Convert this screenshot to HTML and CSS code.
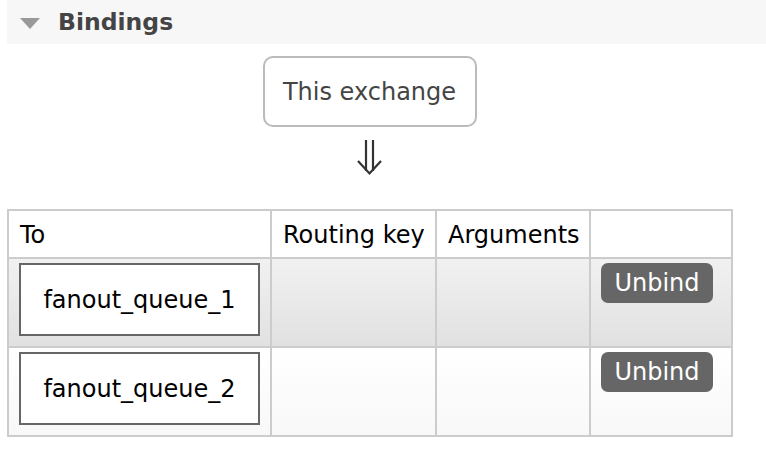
FILE: index.html
```html
<!DOCTYPE html>
<html>
<head>
<meta charset="utf-8">
<link rel="stylesheet" href="styles.css">
</head>
<body>
<div class="page">
  <div class="section-head">
    <span class="caret"></span>
    <h2 class="title">Bindings</h2>
  </div>
  <div class="diagram">
    <div class="exchange">This exchange</div>
    <svg class="arrow" width="26" height="36" viewBox="0 0 26 36">
      <path d="M9 0 V31 M16 0 V31" stroke="#333" stroke-width="2.2" fill="none"/>
      <path d="M1 21 L12.5 33.5 L24 21" stroke="#333" stroke-width="2.2" fill="none"/>
    </svg>
  </div>
  <table class="bindings">
    <colgroup>
      <col class="c-to">
      <col class="c-key">
      <col class="c-args">
      <col class="c-act">
    </colgroup>
    <thead>
      <tr>
        <th>To</th>
        <th>Routing key</th>
        <th>Arguments</th>
        <th></th>
      </tr>
    </thead>
    <tbody>
      <tr class="alt1">
        <td><div class="queue">fanout_queue_1</div></td>
        <td></td>
        <td></td>
        <td class="act"><button class="unbind">Unbind</button></td>
      </tr>
      <tr class="alt2">
        <td><div class="queue">fanout_queue_2</div></td>
        <td></td>
        <td></td>
        <td class="act"><button class="unbind">Unbind</button></td>
      </tr>
    </tbody>
  </table>
</div>
</body>
</html>
```

FILE: styles.css
```css
html, body {
  margin: 0;
  padding: 0;
  background: #fff;
}
body {
  font-family: "DejaVu Sans", Verdana, sans-serif;
  font-size: 24px;
  color: #000;
}
.page {
  padding-left: 7px;
}
.section-head {
  display: flex;
  align-items: center;
  height: 44px;
  background: #f7f7f7;
}
.caret {
  width: 0;
  height: 0;
  margin-left: 13px;
  margin-right: 18px;
  border-left: 10px solid transparent;
  border-right: 10px solid transparent;
  border-top: 11px solid #999;
  margin-top: 2px;
}
.title {
  margin: 0;
  font-size: 23.5px;
  font-weight: bold;
  color: #444;
}
.diagram {
  width: 725px;
  display: flex;
  flex-direction: column;
  align-items: center;
  padding-top: 12px;
}
.exchange {
  box-sizing: border-box;
  width: 214px;
  height: 71px;
  border: 2px solid #bbb;
  border-radius: 10px;
  display: flex;
  align-items: center;
  justify-content: center;
  color: #444;
}
.arrow {
  display: block;
  margin-top: 13px;
}
.bindings {
  margin-top: 33px;
  border-collapse: collapse;
  border: 2px solid #ccc;
  table-layout: fixed;
  width: 724px;
}
.c-to { width: 263px; }
.c-key { width: 165px; }
.c-args { width: 154px; }
.c-act { width: 142px; }
.bindings th, .bindings td {
  border: 2px solid #ccc;
  padding: 0;
}
.bindings th {
  height: 44px;
  font-weight: normal;
  text-align: left;
  padding: 2px 0 0 11px;
  white-space: nowrap;
  background: #fff;
}
.bindings td {
  height: 83px;
  vertical-align: top;
}
.alt1 td {
  background: linear-gradient(#f1f1f1, #e1e1e1);
}
.alt2 td {
  background: linear-gradient(#fff, #f8f8f8);
}
.queue {
  box-sizing: border-box;
  margin: 4px 10px 0 10px;
  height: 73px;
  border: 2px solid #666;
  background: #fff;
  display: flex;
  align-items: center;
  justify-content: center;
}
.act {
  padding: 4px 0 0 10px !important;
}
.unbind {
  display: block;
  box-sizing: border-box;
  width: 112px;
  height: 40px;
  border: none;
  border-radius: 7px;
  background: #666;
  color: #fff;
  font-family: "DejaVu Sans", Verdana, sans-serif;
  font-size: 24px;
  padding: 0;
}
```
